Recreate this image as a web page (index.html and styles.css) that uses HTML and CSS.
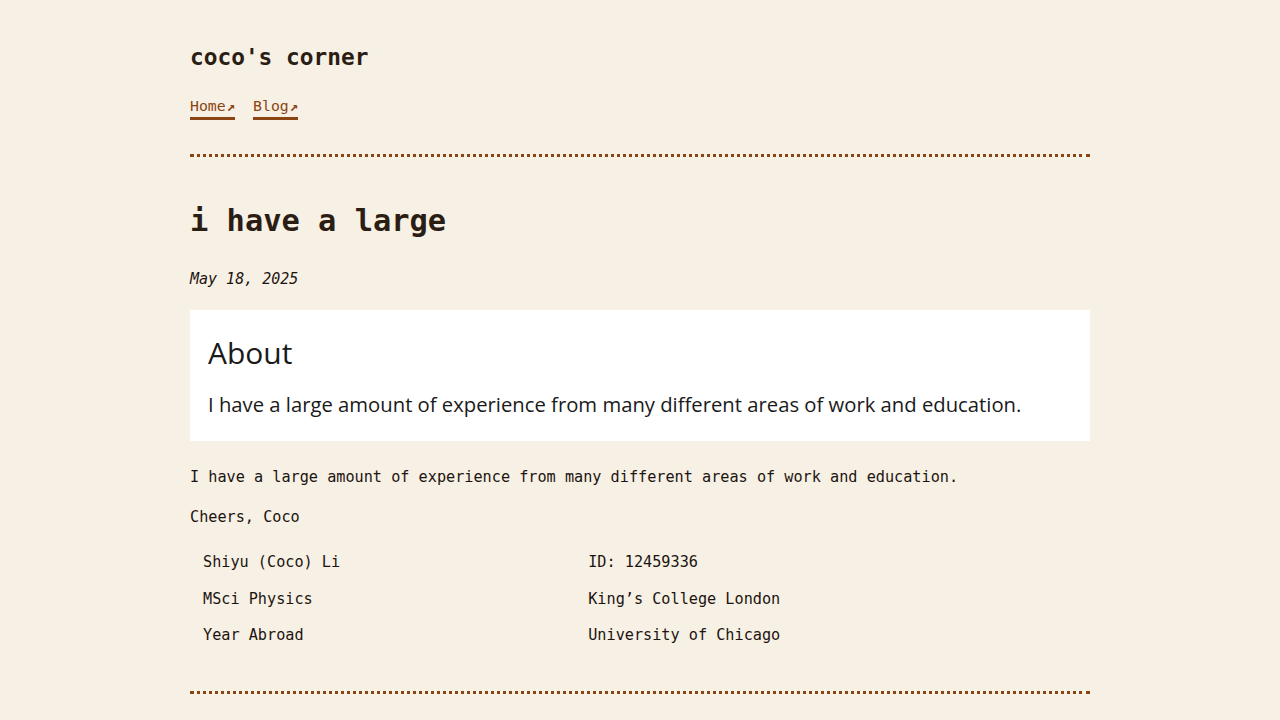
FILE: index.html
```html
<!DOCTYPE html>
<html lang="en">
<head>
<meta charset="utf-8">
<title>coco's corner</title>
<link rel="stylesheet" href="styles.css">
</head>
<body>
<div class="page">
  <header class="site-header">
    <div class="site-title">coco's corner</div>
    <nav class="site-nav">
      <a class="nav-link" href="#">Home<span class="arrow">↗</span></a>
      <a class="nav-link" href="#">Blog<span class="arrow">↗</span></a>
    </nav>
  </header>
  <hr class="divider">
  <main class="post">
    <h1 class="post-title">i have a large</h1>
    <p class="post-date">May 18, 2025</p>
    <section class="about-card">
      <h2 class="about-title">About</h2>
      <p class="about-text">I have a large amount of experience from many different areas of work and education.</p>
    </section>
    <p class="body-text">I have a large amount of experience from many different areas of work and education.</p>
    <p class="body-text">Cheers, Coco</p>
    <table class="info-table">
      <tr><td>Shiyu (Coco) Li</td><td>ID: 12459336</td></tr>
      <tr><td>MSci Physics</td><td>King’s College London</td></tr>
      <tr><td>Year Abroad</td><td>University of Chicago</td></tr>
    </table>
  </main>
  <hr class="divider divider-bottom">
</div>
</body>
</html>
```
FILE: styles.css
```css
html, body {
  margin: 0;
  padding: 0;
}
body {
  background: #f7f0e4;
  color: #1c1410;
  font-family: "DejaVu Sans Mono", "Liberation Mono", monospace;
  font-size: 15.2px;
}
.page {
  width: 900px;
  margin: 0 auto;
  padding-top: 40px;
}
.site-title {
  font-size: 22.8px;
  font-weight: bold;
  color: #2b1d14;
  line-height: 34px;
}
.site-nav {
  display: flex;
  gap: 18px;
  margin-top: 21px;
}
.nav-link {
  display: inline-block;
  color: #8b4513;
  text-decoration: none;
  font-size: 14.8px;
  line-height: 21px;
  border-bottom: 3px solid #8b4513;
}
.arrow {
  font-size: 14px;
  font-weight: bold;
  margin-left: 1px;
}
.divider {
  border: 0;
  border-top: 3px dotted #8b4513;
  margin: 34px 0 0;
  height: 0;
}
.post-title {
  font-size: 30.4px;
  font-weight: bold;
  color: #2b1d14;
  line-height: 40px;
  margin: 44px 0 0;
}
.post-date {
  font-style: italic;
  font-size: 15px;
  margin: 28px 0 0;
  line-height: 20px;
}
.about-card {
  background: #ffffff;
  margin-top: 21px;
  padding: 23px 18px 22px;
  font-family: "Open Sans", "Noto Sans", sans-serif;
  color: #1a1a1a;
}
.about-title {
  font-size: 30px;
  font-weight: 500;
  margin: 0;
  line-height: 40px;
}
.about-text {
  font-size: 20.25px;
  font-weight: 400;
  margin: 16px 0 0;
  line-height: 30px;
}
.body-text {
  margin: 0;
  margin-top: 25px;
  line-height: 22px;
}
.body-text + .body-text {
  margin-top: 18px;
}
.info-table {
  width: 100%;
  border-collapse: collapse;
  margin-top: 16px;
}
.info-table td {
  padding: 7px 13px;
  line-height: 22.5px;
  vertical-align: top;
}
.divider-bottom {
  margin-top: 37px;
}
```
